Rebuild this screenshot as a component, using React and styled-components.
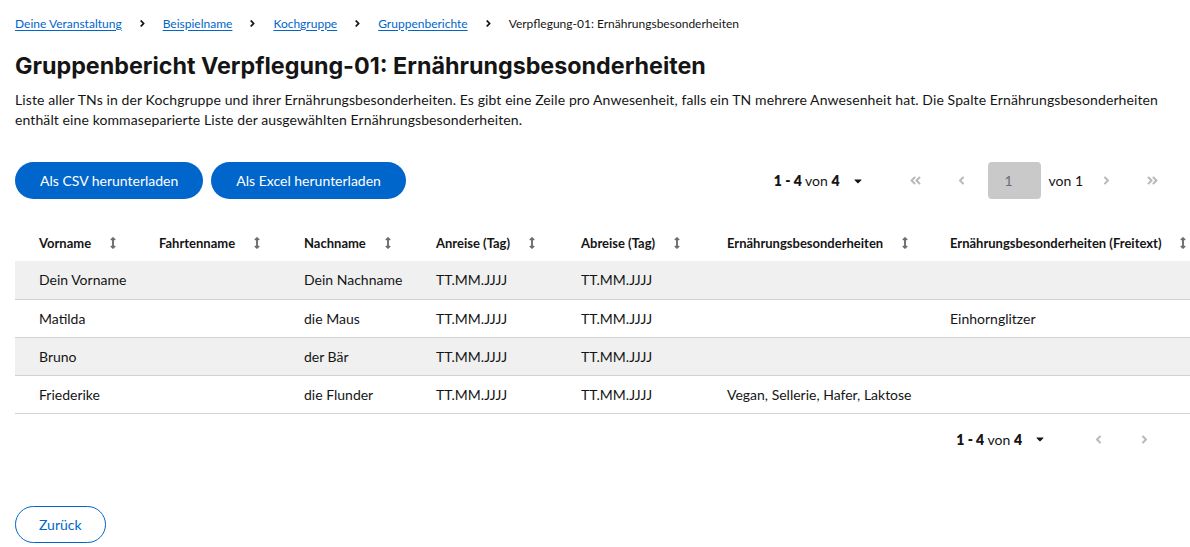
import React from 'react';
import styled, { createGlobalStyle } from 'styled-components';
import {
  FaAngleRight,
  FaAngleLeft,
  FaAngleDoubleLeft,
  FaAngleDoubleRight,
  FaCaretDown,
  FaArrowsAltV
} from 'react-icons/fa';

const GlobalStyle = createGlobalStyle`
  html, body {
    margin: 0;
    padding: 0;
    background: #fff;
    overflow: hidden;
  }
  body {
    font-family: Lato, "Open Sans", sans-serif;
    color: #151515;
    font-size: 14px;
  }
  * { box-sizing: border-box; }
`;

const columns = [
  { key: 'vorname', label: 'Vorname', width: 144 },
  { key: 'fahrtenname', label: 'Fahrtenname', width: 145 },
  { key: 'nachname', label: 'Nachname', width: 132 },
  { key: 'anreise', label: 'Anreise (Tag)', width: 145 },
  { key: 'abreise', label: 'Abreise (Tag)', width: 146 },
  { key: 'besonderheiten', label: 'Ernährungsbesonderheiten', width: 223 },
  { key: 'freitext', label: 'Ernährungsbesonderheiten (Freitext)', width: 262 }
];

const rows = [
  { vorname: 'Dein Vorname', nachname: 'Dein Nachname', anreise: 'TT.MM.JJJJ', abreise: 'TT.MM.JJJJ' },
  { vorname: 'Matilda', nachname: 'die Maus', anreise: 'TT.MM.JJJJ', abreise: 'TT.MM.JJJJ', freitext: 'Einhornglitzer' },
  { vorname: 'Bruno', nachname: 'der Bär', anreise: 'TT.MM.JJJJ', abreise: 'TT.MM.JJJJ' },
  {
    vorname: 'Friederike',
    nachname: 'die Flunder',
    anreise: 'TT.MM.JJJJ',
    abreise: 'TT.MM.JJJJ',
    besonderheiten: 'Vegan, Sellerie, Hafer, Laktose'
  }
];

const crumbs = ['Deine Veranstaltung', 'Beispielname', 'Kochgruppe', 'Gruppenberichte'];

const Toggle = () => (
  <PageToggle>
    <b>1 - 4</b> von <b>4</b>
    <Caret>
      <FaCaretDown size={12} />
    </Caret>
  </PageToggle>
);

export default function App() {
  return (
    <Page>
      <GlobalStyle />
      <Breadcrumb>
        {crumbs.map(c => (
          <React.Fragment key={c}>
            <Crumb href="#">{c}</Crumb>
            <Sep>
              <FaAngleRight size={11} />
            </Sep>
          </React.Fragment>
        ))}
        <Current>Verpflegung-01: Ernährungsbesonderheiten</Current>
      </Breadcrumb>

      <Title>Gruppenbericht Verpflegung-01: Ernährungsbesonderheiten</Title>
      <Description>
        Liste aller TNs in der Kochgruppe und ihrer Ernährungsbesonderheiten. Es gibt eine Zeile pro
        Anwesenheit, falls ein TN mehrere Anwesenheit hat. Die Spalte Ernährungsbesonderheiten
        enthält eine kommaseparierte Liste der ausgewählten Ernährungsbesonderheiten.
      </Description>

      <Toolbar>
        <Actions>
          <PrimaryButton>Als CSV herunterladen</PrimaryButton>
          <PrimaryButton>Als Excel herunterladen</PrimaryButton>
        </Actions>
        <Pagination>
          <Toggle />
          <NavGroup>
            <NavButton>
              <FaAngleDoubleLeft size={13} />
            </NavButton>
            <NavButton>
              <FaAngleLeft size={13} />
            </NavButton>
            <PageInput>1</PageInput>
            <OfPages>von 1</OfPages>
            <NavButton>
              <FaAngleRight size={13} />
            </NavButton>
            <NavButton>
              <FaAngleDoubleRight size={13} />
            </NavButton>
          </NavGroup>
        </Pagination>
      </Toolbar>

      <TableWrap>
        <Table>
          <colgroup>
            {columns.map(c => (
              <col key={c.key} style={{ width: c.width }} />
            ))}
          </colgroup>
          <thead>
            <tr>
              {columns.map(c => (
                <Th key={c.key}>
                  <HeadInner>
                    {c.label}
                    <SortIcon>
                      <FaArrowsAltV size={12} />
                    </SortIcon>
                  </HeadInner>
                </Th>
              ))}
            </tr>
          </thead>
          <tbody>
            {rows.map((r, i) => (
              <Tr key={i} $striped={i % 2 === 0}>
                {columns.map(c => (
                  <Td key={c.key}>{r[c.key] || ''}</Td>
                ))}
              </Tr>
            ))}
          </tbody>
        </Table>
      </TableWrap>

      <BottomPagination>
        <Toggle />
        <NavGroup>
          <NavButton>
            <FaAngleLeft size={13} />
          </NavButton>
          <NavButton>
            <FaAngleRight size={13} />
          </NavButton>
        </NavGroup>
      </BottomPagination>

      <Footer>
        <SecondaryButton>Zurück</SecondaryButton>
      </Footer>
    </Page>
  );
}

const Page = styled.div`
  width: 1190px;
  padding: 13px 15px 0 15px;
`;

const Breadcrumb = styled.nav`
  display: flex;
  align-items: center;
  height: 20px;
  font-size: 12px;
`;

const Crumb = styled.a`
  color: #0066cc;
  text-decoration: underline;
  text-underline-offset: 2px;
`;

const Sep = styled.span`
  display: inline-flex;
  color: #151515;
  margin: 0 15px 0 15px;
`;

const Current = styled.span`
  color: #151515;
`;

const Title = styled.h1`
  margin: 19px 0 0;
  font-family: Inter, "Open Sans", sans-serif;
  font-size: 23.3px;
  font-weight: 700;
  line-height: 28px;
`;

const Description = styled.p`
  margin: 10px 0 0;
  font-size: 14px;
  line-height: 20px;
  max-width: 1165px;
  letter-spacing: 0.1px;
`;

const Toolbar = styled.div`
  display: flex;
  align-items: center;
  justify-content: space-between;
  margin-top: 32px;
`;

const Actions = styled.div`
  display: flex;
  gap: 8px;
`;

const PrimaryButton = styled.button`
  height: 37px;
  padding: 0 25px;
  border: none;
  border-radius: 30px;
  background: #0066cc;
  color: #fff;
  font-family: inherit;
  font-size: 14px;
  cursor: pointer;
`;

const Pagination = styled.div`
  display: flex;
  align-items: center;
`;

const PageToggle = styled.div`
  display: flex;
  align-items: center;
  font-size: 14px;
  white-space: pre;
  b {
    font-weight: 800;
  }
`;

const Caret = styled.span`
  display: inline-flex;
  margin-left: 12px;
`;

const NavGroup = styled.div`
  display: flex;
  align-items: center;
  margin-left: 29px;
`;

const NavButton = styled.span`
  display: inline-flex;
  align-items: center;
  justify-content: center;
  width: 46px;
  height: 37px;
  color: #b8bbbe;
`;

const PageInput = styled.span`
  display: inline-flex;
  align-items: center;
  width: 53px;
  height: 37px;
  margin-left: 3px;
  padding-left: 17px;
  border-radius: 4px;
  background: #c9c9c9;
  color: #6a6e73;
  font-size: 14px;
`;

const OfPages = styled.span`
  margin-left: 8px;
  font-size: 14px;
`;

const TableWrap = styled.div`
  margin-top: 25px;
  width: 1240px;
`;

const Table = styled.table`
  border-collapse: collapse;
  table-layout: fixed;
  width: 1197px;
`;

const Th = styled.th`
  height: 37px;
  padding: 0;
  text-align: left;
  font-size: 13px;
  font-weight: 700;
  vertical-align: middle;
  &:first-child {
    padding-left: 24px;
  }
`;

const HeadInner = styled.span`
  display: inline-flex;
  align-items: center;
  white-space: nowrap;
`;

const SortIcon = styled.span`
  display: inline-flex;
  color: #6a6e73;
  margin-left: 16px;
`;

const Tr = styled.tr`
  background: ${p => (p.$striped ? '#f0f0f0' : '#fff')};
  border-bottom: 1px solid #d2d2d2;
`;

const Td = styled.td`
  height: 38px;
  padding: 0;
  font-size: 14px;
  white-space: nowrap;
  &:first-child {
    padding-left: 24px;
  }
`;

const BottomPagination = styled.div`
  display: flex;
  align-items: center;
  justify-content: flex-end;
  padding-right: 8px;
  margin-top: 7px;
`;

const Footer = styled.div`
  margin-top: 48px;
`;

const SecondaryButton = styled.button`
  height: 37px;
  padding: 0 23px;
  border: 1px solid #0066cc;
  border-radius: 30px;
  background: #fff;
  color: #0066cc;
  font-family: inherit;
  font-size: 14px;
  cursor: pointer;
`;
